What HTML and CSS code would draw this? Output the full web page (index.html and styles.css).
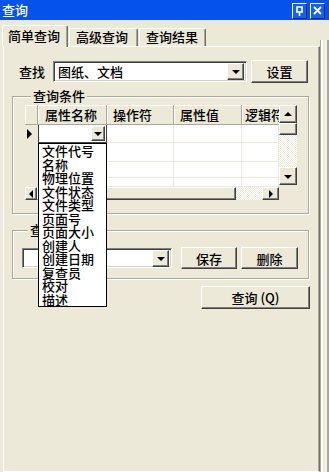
FILE: index.html
```html
<!DOCTYPE html>
<html lang="zh-CN">
  <head>
    <meta charset="UTF-8" />
    <meta name="viewport" content="width=device-width, initial-scale=1.0" />
    <title>查询</title>
    <link rel="stylesheet" href="styles.css">
  </head>
  <body>
    <div class="window">
      <div class="titlebar">
        <span class="title">查询</span>
        <div class="title-buttons">
          <span class="title-btn">
            <svg width="9" height="10" viewBox="0 0 9 10"><path d="M2 1h5v5H2z M1 6h7 M4.5 6v4" fill="none" stroke="#fff" stroke-width="1.6"/></svg>
          </span>
          <span class="title-btn">
            <svg width="9" height="9" viewBox="0 0 9 9"><path d="M1 1l7 7M8 1L1 8" stroke="#fff" stroke-width="1.8"/></svg>
          </span>
        </div>
      </div>

      <div class="main">
        <div class="tabs-wrap">
          <div class="tabstrip">
            <div class="tab active">简单查询</div>
            <div class="tab">高级查询</div>
            <div class="tab">查询结果</div>
          </div>

          <div class="panel">
            <div class="find-row">
              <span class="label">查找</span>
              <div class="combo combo-find">
                <span class="combo-text">图纸、文档</span>
                <span class="drop-btn"><i class="arrow-down"></i></span>
              </div>
              <button class="btn btn-set">设置</button>
            </div>

            <div class="group group-cond">
              <div class="group-title">查询条件</div>
              <div class="grid">
                <div class="hcell corner-cell"></div>
                <div class="hcell">属性名称</div>
                <div class="hcell">操作符</div>
                <div class="hcell">属性值</div>
                <div class="hcell clip">逻辑符</div>

                <div class="rowhead"><i class="arrow-right"></i></div>
                <div class="cell cell-edit">
                  <span class="drop-btn small"><i class="arrow-down"></i></span>
                </div>
                <div class="cell"></div>
                <div class="cell"></div>
                <div class="cell"></div>

                <div class="rowhead"></div>
                <div class="cell"></div>
                <div class="cell"></div>
                <div class="cell"></div>
                <div class="cell"></div>

                <div class="rowhead"></div>
                <div class="cell"></div>
                <div class="cell"></div>
                <div class="cell"></div>
                <div class="cell"></div>

                <div class="rowhead"></div>
                <div class="cell"></div>
                <div class="cell"></div>
                <div class="cell"></div>
                <div class="cell"></div>

                <div class="vscroll">
                  <span class="sb-btn"><i class="arrow-up"></i></span>
                  <span class="sb-thumb-v"></span>
                  <span class="sb-track"></span>
                  <span class="sb-btn"><i class="arrow-down"></i></span>
                </div>
                <div class="hscroll">
                  <span class="sb-btn narrow"><i class="arrow-left"></i></span>
                  <span class="sb-thumb-h"></span>
                  <span class="sb-track"></span>
                  <span class="sb-btn"><i class="arrow-right small"></i></span>
                </div>
                <div class="sb-corner"></div>

                <ul class="dropdown">
                  <li>文件代号</li>
                  <li>名称</li>
                  <li>物理位置</li>
                  <li>文件状态</li>
                  <li>文件类型</li>
                  <li>页面号</li>
                  <li>页面大小</li>
                  <li>创建人</li>
                  <li>创建日期</li>
                  <li>复查员</li>
                  <li>校对</li>
                  <li>描述</li>
                </ul>
              </div>
            </div>

            <div class="group group-plan">
              <div class="group-title">查询方案</div>
              <div class="plan-row">
                <div class="combo combo-plan">
                  <span class="combo-text"></span>
                  <span class="drop-btn"><i class="arrow-down"></i></span>
                </div>
                <button class="btn btn-save">保存</button>
                <button class="btn btn-del">删除</button>
              </div>
            </div>

            <div class="query-row">
              <button class="btn btn-query">查询 (<u>Q</u>)</button>
            </div>
          </div>
        </div>
        <div class="frame-strip"></div>
      </div>
    </div>
  </body>
</html>
```

FILE: styles.css
```css
* {
  box-sizing: border-box;
}

body {
  margin: 0;
  font-family: "Noto Sans CJK SC", "Liberation Sans", sans-serif;
  font-size: 13px;
  font-weight: 500;
  color: #000;
  background: #ece9d8;
}

.window {
  width: 329px;
  height: 472px;
  display: flex;
  flex-direction: column;
  background: #ece9d8;
}

/* title bar */
.titlebar {
  height: 20px;
  background: #0652ec;
  display: flex;
  align-items: center;
  justify-content: space-between;
  padding: 0 4px 0 2px;
}

.title {
  color: #fff;
  font-size: 13px;
  line-height: 14px;
}

.title-buttons {
  display: flex;
  gap: 3px;
  padding-top: 1px;
}

.title-btn {
  width: 15px;
  height: 16px;
  background: #1660f0;
  border: 1px solid;
  border-color: #fff #0a2a8a #0a2a8a #fff;
  display: flex;
  align-items: center;
  justify-content: center;
}

/* tabs */
.main {
  flex: 1;
  display: flex;
}

.tabs-wrap {
  width: 320px;
  display: flex;
  flex-direction: column;
  padding-left: 3px;
}

.tabstrip {
  height: 26px;
  display: flex;
  align-items: flex-end;
}

.tab {
  height: 18px;
  padding: 0 6px;
  line-height: 16px;
  border: 1px solid;
  border-bottom: none;
  border-color: #fff #716f64 transparent #fff;
  border-radius: 2px 2px 0 0;
  box-shadow: inset -1px 0 #aca899;
}

.tab:nth-child(2) {
  width: 69px;
  margin-left: 1px;
}

.tab:nth-child(3) {
  width: 67px;
  margin-left: 1px;
}

.tab.active {
  width: 66px;
  height: 22px;
  margin-left: -1px;
  margin-bottom: -1px;
  padding-left: 5px;
  line-height: 20px;
  background: #ece9d8;
  position: relative;
  z-index: 1;
}

.panel {
  flex: 1;
  border-left: 1px solid #fff;
  border-top: 1px solid #fff;
  border-bottom: 1px solid #fff;
  border-right: 1px solid #716f64;
  box-shadow: inset -1px 0 #aca899;
  display: flex;
  flex-direction: column;
}

.frame-strip {
  flex: 1;
  margin-top: 20px;
  border-left: 1px solid #aca899;
  border-right: 2px solid #aca899;
  box-shadow: inset 2px 0 #fff, inset -2px 0 #f5f3ea;
}

/* controls */
.find-row {
  margin-top: 13px;
  padding-left: 15px;
  height: 23px;
  display: flex;
  align-items: center;
}

.label {
  width: 34px;
}

.combo {
  height: 21px;
  background: #fff;
  border: 1px solid;
  border-color: #808080 #fff #fff #808080;
  box-shadow: inset 1px 1px #404040, inset -1px -1px #d4d0c8;
  display: flex;
  align-items: center;
  padding: 2px;
}

.combo-text {
  flex: 1;
  padding-left: 2px;
  line-height: 15px;
}

.combo-find {
  width: 194px;
}

.drop-btn {
  width: 17px;
  height: 17px;
  background: #ece9d8;
  border: 1px solid;
  border-color: #fff #404040 #404040 #fff;
  box-shadow: inset -1px -1px #808080;
  display: flex;
  align-items: center;
  justify-content: center;
}

.drop-btn.small {
  width: 14px;
  height: 15px;
}

.btn {
  font-family: inherit;
  font-size: 13px;
  font-weight: 500;
  height: 23px;
  padding: 0;
  background: #ece9d8;
  border: 1px solid;
  border-color: #fff #404040 #404040 #fff;
  box-shadow: inset -1px -1px #808080;
  color: #000;
}

.btn-set {
  width: 57px;
  margin-left: 4px;
}

/* triangles */
.arrow-down,
.arrow-up,
.arrow-left,
.arrow-right {
  width: 0;
  height: 0;
  display: block;
  border: 4px solid transparent;
}

.arrow-down {
  border-top: 4px solid #000;
  border-bottom-width: 0;
  margin-top: 1px;
}

.arrow-up {
  border-bottom: 4px solid #000;
  border-top-width: 0;
}

.arrow-left {
  border-right: 4px solid #000;
  border-left-width: 0;
}

.arrow-right {
  border-left: 5px solid #000;
  border-right-width: 0;
  border-top-width: 5px;
  border-bottom-width: 5px;
}

.arrow-right.small {
  border-left-width: 4px;
  border-top-width: 4px;
  border-bottom-width: 4px;
}

/* group boxes */
.group {
  margin-left: 8px;
  width: 297px;
  border: 1px solid #aca899;
  box-shadow: inset 1px 1px #fff, 1px 1px #fff;
}

.group-title {
  width: fit-content;
  margin: -8px 0 0 6px;
  padding: 0 2px;
  background: #ece9d8;
  line-height: 13px;
}

.group-cond {
  margin-top: 13px;
  padding: 0 0 13px 12px;
}

.group-plan {
  margin-top: 16px;
  padding: 0 0 9px 9px;
}

/* data grid */
.grid {
  margin-top: 3px;
  position: relative;
  display: grid;
  grid-template-columns: 13px 69px 67px 68px 37px 18px;
  grid-template-rows: 20px 18px 19px 16px 9px 13px;
  width: 272px;
}

.hcell {
  background: #ece9d8;
  border-right: 1px solid #aca899;
  border-bottom: 1px solid #aca899;
  box-shadow: inset 1px 1px #fff;
  line-height: 19px;
  padding-left: 6px;
  white-space: nowrap;
  overflow: hidden;
}

.hcell:nth-child(2) {
  padding-left: 7px;
}

.hcell.clip {
  border-right: none;
  padding-left: 3px;
}

.rowhead {
  background: #ece9d8;
  display: flex;
  align-items: center;
  padding-left: 2px;
}

.cell {
  background: #fff;
  border-right: 1px solid #ece9d8;
  border-bottom: 1px solid #ece9d8;
}

.cell-edit {
  border: 1px solid #404040;
  border-top: none;
  display: flex;
  justify-content: flex-end;
  align-items: center;
  padding-right: 1px;
}

.vscroll {
  grid-column: 6;
  grid-row: 1 / 6;
  display: flex;
  flex-direction: column;
  height: 80px;
}

.hscroll {
  grid-column: 1 / 6;
  grid-row: 6;
  display: flex;
}

.sb-corner {
  grid-column: 6;
  grid-row: 6;
  background: #ece9d8;
}

.sb-btn {
  width: 18px;
  height: 18px;
  flex: none;
  background: #ece9d8;
  border: 1px solid;
  border-color: #fff #404040 #404040 #fff;
  box-shadow: inset -1px -1px #808080;
  display: flex;
  align-items: center;
  justify-content: center;
}

.hscroll .sb-btn {
  height: 13px;
  width: 17px;
}

.hscroll .sb-btn.narrow {
  width: 12px;
}

.sb-thumb-v {
  height: 12px;
  background: #ece9d8;
  border: 1px solid;
  border-color: #fff #404040 #404040 #fff;
  box-shadow: inset -1px -1px #808080;
}

.sb-thumb-h {
  width: 199px;
  background: #ece9d8;
  border: 1px solid;
  border-color: #fff #404040 #404040 #fff;
  box-shadow: inset -1px -1px #808080;
}

.sb-track {
  flex: 1;
  background: repeating-conic-gradient(#fff 0 25%, #ece9d8 0 50%) 0 0 / 2px 2px;
}

/* open drop-down list over the grid */
.dropdown {
  position: absolute;
  left: 13px;
  top: 38px;
  width: 69px;
  margin: 0;
  padding: 0 0 0 3px;
  list-style: none;
  background: #fff;
  border: 1px solid #000;
  z-index: 2;
}

.dropdown li {
  height: 13.5px;
  line-height: 14px;
  white-space: nowrap;
}

/* plan row */
.plan-row {
  margin-top: 11px;
  display: flex;
  align-items: center;
}

.combo-plan {
  width: 150px;
  height: 20px;
}

.btn-save {
  width: 56px;
  height: 22px;
  margin-left: 9px;
}

.btn-del {
  width: 57px;
  height: 22px;
  margin-left: 4px;
}

.query-row {
  margin-top: 7px;
  display: flex;
  justify-content: flex-end;
  padding-right: 9px;
}

.btn-query {
  width: 109px;
}

.btn-query u {
  text-decoration: none;
}
```
